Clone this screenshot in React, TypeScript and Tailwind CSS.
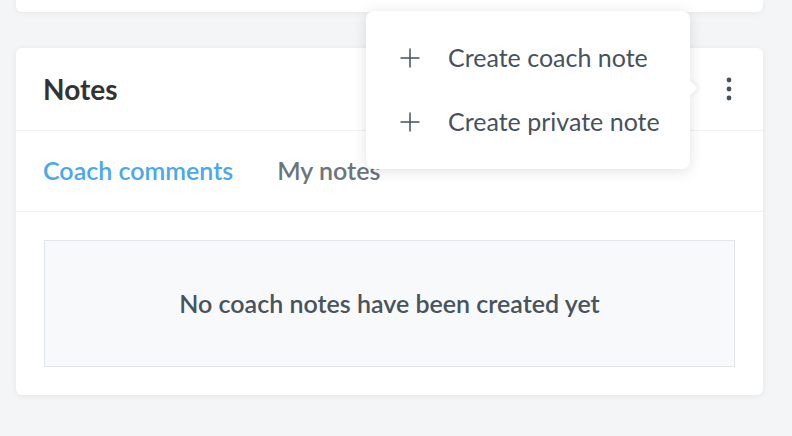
import React from "react";

const PlusIcon = () => (
  <svg width="20" height="20" viewBox="0 0 20 20" fill="none" stroke="#47525b" strokeWidth="1.5">
    <path d="M10 0.5v19M0.5 10h19" />
  </svg>
);

const DotsIcon = () => (
  <svg width="6" height="24" viewBox="0 0 6 24" fill="#47525b">
    <circle cx="3" cy="3" r="2.4" />
    <circle cx="3" cy="12" r="2.4" />
    <circle cx="3" cy="21" r="2.4" />
  </svg>
);

const MenuItem = ({ label }: { label: string }) => (
  <button type="button" className="flex h-16 w-full items-center gap-7 pl-[34px] text-left text-[25px] text-[#47525b]">
    <PlusIcon />
    <span>{label}</span>
  </button>
);

const App = () => {
  return (
    <div className="min-h-[436px] w-[792px] bg-[#f4f5f7] pl-4 font-['Lato','Liberation_Sans',sans-serif]">
      <div className="h-3 w-[747px] rounded-b-md bg-white shadow-[0_1px_6px_rgba(0,0,0,0.06)]" />

      <div className="relative mt-9 w-[747px] rounded-md bg-white shadow-[0_1px_6px_rgba(0,0,0,0.07)]">
        <div className="flex h-[83px] items-center justify-between border-b border-[#eef0f2] pl-[27px] pr-[31px]">
          <h2 className="text-[28px] font-bold text-[#333333]">Notes</h2>
          <DotsIcon />
        </div>

        <div className="flex h-[81px] items-center gap-[44px] border-b border-[#eef0f2] pl-[27px] text-[25px] font-semibold">
          <span className="text-[#4aa8ef]">Coach comments</span>
          <span className="text-[#6b757d]">My notes</span>
        </div>

        <div className="px-[28px] pb-[28px] pt-[28px]">
          <div className="flex h-[127px] items-center justify-center border border-[#e1e4e8] bg-[#f8f9fb] text-[25px] font-semibold text-[#48535c]">
            No coach notes have been created yet
          </div>
        </div>

        <div className="absolute left-[350px] top-[-37px] w-[324px] rounded-lg bg-white py-[15px] shadow-[0_2px_14px_rgba(0,0,0,0.12)]">
          <div className="absolute right-[-5px] top-[71px] h-3 w-3 rotate-45 bg-white shadow-[2px_-2px_4px_rgba(0,0,0,0.05)]" />
          <div className="relative">
            <MenuItem label="Create coach note" />
            <MenuItem label="Create private note" />
          </div>
        </div>
      </div>
    </div>
  );
};

export default App;
